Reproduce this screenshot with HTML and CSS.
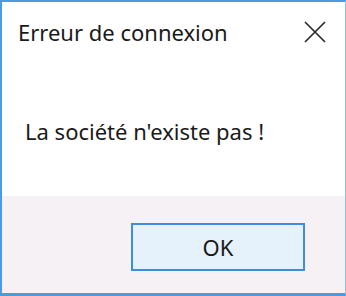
FILE: index.html
```html
<!DOCTYPE html>
<html lang="fr">
<head>
<meta charset="utf-8">
<title>Erreur de connexion</title>
<link rel="stylesheet" href="styles.css">
</head>
<body>
<div class="window">
  <div class="titlebar">
    <span class="title">Erreur de connexion</span>
    <span class="close">
      <svg width="22" height="22" viewBox="0 0 22 22"><path d="M1 1L21 21M21 1L1 21" stroke="#2b2b2b" stroke-width="1.7" fill="none"/></svg>
    </span>
  </div>
  <div class="content">
    <p class="message">La société n'existe pas !</p>
  </div>
  <div class="footer">
    <button class="ok">OK</button>
  </div>
</div>
</body>
</html>
```
FILE: styles.css
```css
html, body {
  margin: 0;
  padding: 0;
  background: #ffffff;
}
.window {
  width: 346px;
  height: 296px;
  box-sizing: border-box;
  border-left: 2px solid #4a9be4;
  border-top: 2px solid #4a9be4;
  border-right: 1px solid #8cc0ee;
  border-bottom: 3px solid #4a9be4;
  display: flex;
  flex-direction: column;
  font-family: "Noto Sans", "Open Sans", sans-serif;
  color: #1a1a1a;
}
.titlebar {
  height: 60px;
  display: flex;
  align-items: center;
  justify-content: space-between;
  padding: 0 19px 4px 16px;
}
.title {
  font-size: 22px;
}
.close {
  display: flex;
  width: 22px;
  height: 22px;
}
.content {
  flex: 1;
  background: #ffffff;
  padding: 0 23px;
}
.message {
  margin: 50px 0 0 0;
  font-size: 22px;
}
.footer {
  height: 97px;
  background: #f5f1f5;
  display: flex;
  justify-content: flex-end;
  align-items: flex-start;
  padding: 27px 40px 0 0;
  box-sizing: border-box;
}
.ok {
  width: 174px;
  height: 48px;
  border: 2px solid #3d8ee0;
  background: #e5f1fb;
  font-family: "Noto Sans", "Open Sans", sans-serif;
  font-size: 22px;
  color: #1a1a1a;
  padding: 0;
}
```
